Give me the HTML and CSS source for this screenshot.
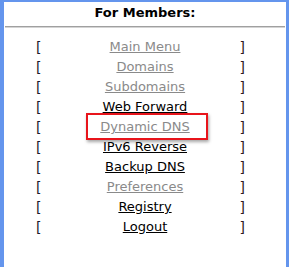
FILE: index.html
```html
<!DOCTYPE html>
<html lang="en">
<head>
  <meta charset="UTF-8">
  <title>For Members</title>
  <link rel="stylesheet" href="styles.css">
</head>
<body>
  <div class="panel">
    <!-- Panel heading -->
    <h3 class="panel-title">For Members:</h3>
    <div class="rule"></div>

    <!-- Member menu -->
    <ul class="menu">
      <li class="menu-row"><span class="open">[</span><a class="dim" href="#">Main Menu</a><span class="close">]</span></li>
      <li class="menu-row"><span class="open">[</span><a class="dim" href="#">Domains</a><span class="close">]</span></li>
      <li class="menu-row"><span class="open">[</span><a class="dim" href="#">Subdomains</a><span class="close">]</span></li>
      <li class="menu-row"><span class="open">[</span><a href="#">Web Forward</a><span class="close">]</span></li>
      <li class="menu-row"><span class="open">[</span><a class="dim marked" href="#">Dynamic DNS</a><span class="close">]</span></li>
      <li class="menu-row"><span class="open">[</span><a href="#">IPv6 Reverse</a><span class="close">]</span></li>
      <li class="menu-row"><span class="open">[</span><a href="#">Backup DNS</a><span class="close">]</span></li>
      <li class="menu-row"><span class="open">[</span><a class="dim" href="#">Preferences</a><span class="close">]</span></li>
      <li class="menu-row"><span class="open">[</span><a href="#">Registry</a><span class="close">]</span></li>
      <li class="menu-row"><span class="open">[</span><a href="#">Logout</a><span class="close">]</span></li>
    </ul>
  </div>
</body>
</html>
```

FILE: styles.css
```css
/* Page reset */
body {
    margin: 0;
    font-family: "DejaVu Sans", Verdana, sans-serif;
    font-size: 13px;
    color: #000;
    background: #fff;
}

/* Blue framed panel */
.panel {
    height: 265px;
    border-top: 2px solid #6495ed;
    border-left: 4px solid #6495ed;
    border-right: 3px solid #6495ed;
}

.panel-title {
    margin: 0;
    font-size: 13px;
    font-weight: bold;
    line-height: 22px;
    text-align: center;
}

/* Grey divider under the heading */
.rule {
    margin: 2px 1px 0;
    height: 1px;
    background: #a0a0a0;
    border-bottom: 1px solid #d4d4d4;
}

.menu {
    list-style: none;
    margin: 9px 0 0;
    padding: 0;
}

/* Each row: brackets at fixed spots, link centred on the panel */
.menu-row {
    display: grid;
    grid-template-areas: "row";
    align-items: center;
    height: 20px;
    line-height: 20px;
}

.menu-row > * {
    grid-area: row;
}

.open {
    justify-self: start;
    margin-left: 32px;
    color: #1a1a2e;
    font-size: 14px;
}

.close {
    justify-self: end;
    margin-right: 41px;
    color: #2e1a1a;
    font-size: 14px;
}

.menu-row a {
    justify-self: center;
    color: #000;
    text-decoration: underline;
}

.menu-row a.dim {
    color: #8a8a8a;
}

/* Red highlight box drawn over the Dynamic DNS link */
.marked {
    position: relative;
}

.marked::after {
    content: "";
    position: absolute;
    top: -4px;
    bottom: -3px;
    left: -14px;
    right: -18px;
    border: 2px solid #e8141b;
    box-shadow: 1px 2px 3px rgba(0, 0, 0, 0.35);
}
```
